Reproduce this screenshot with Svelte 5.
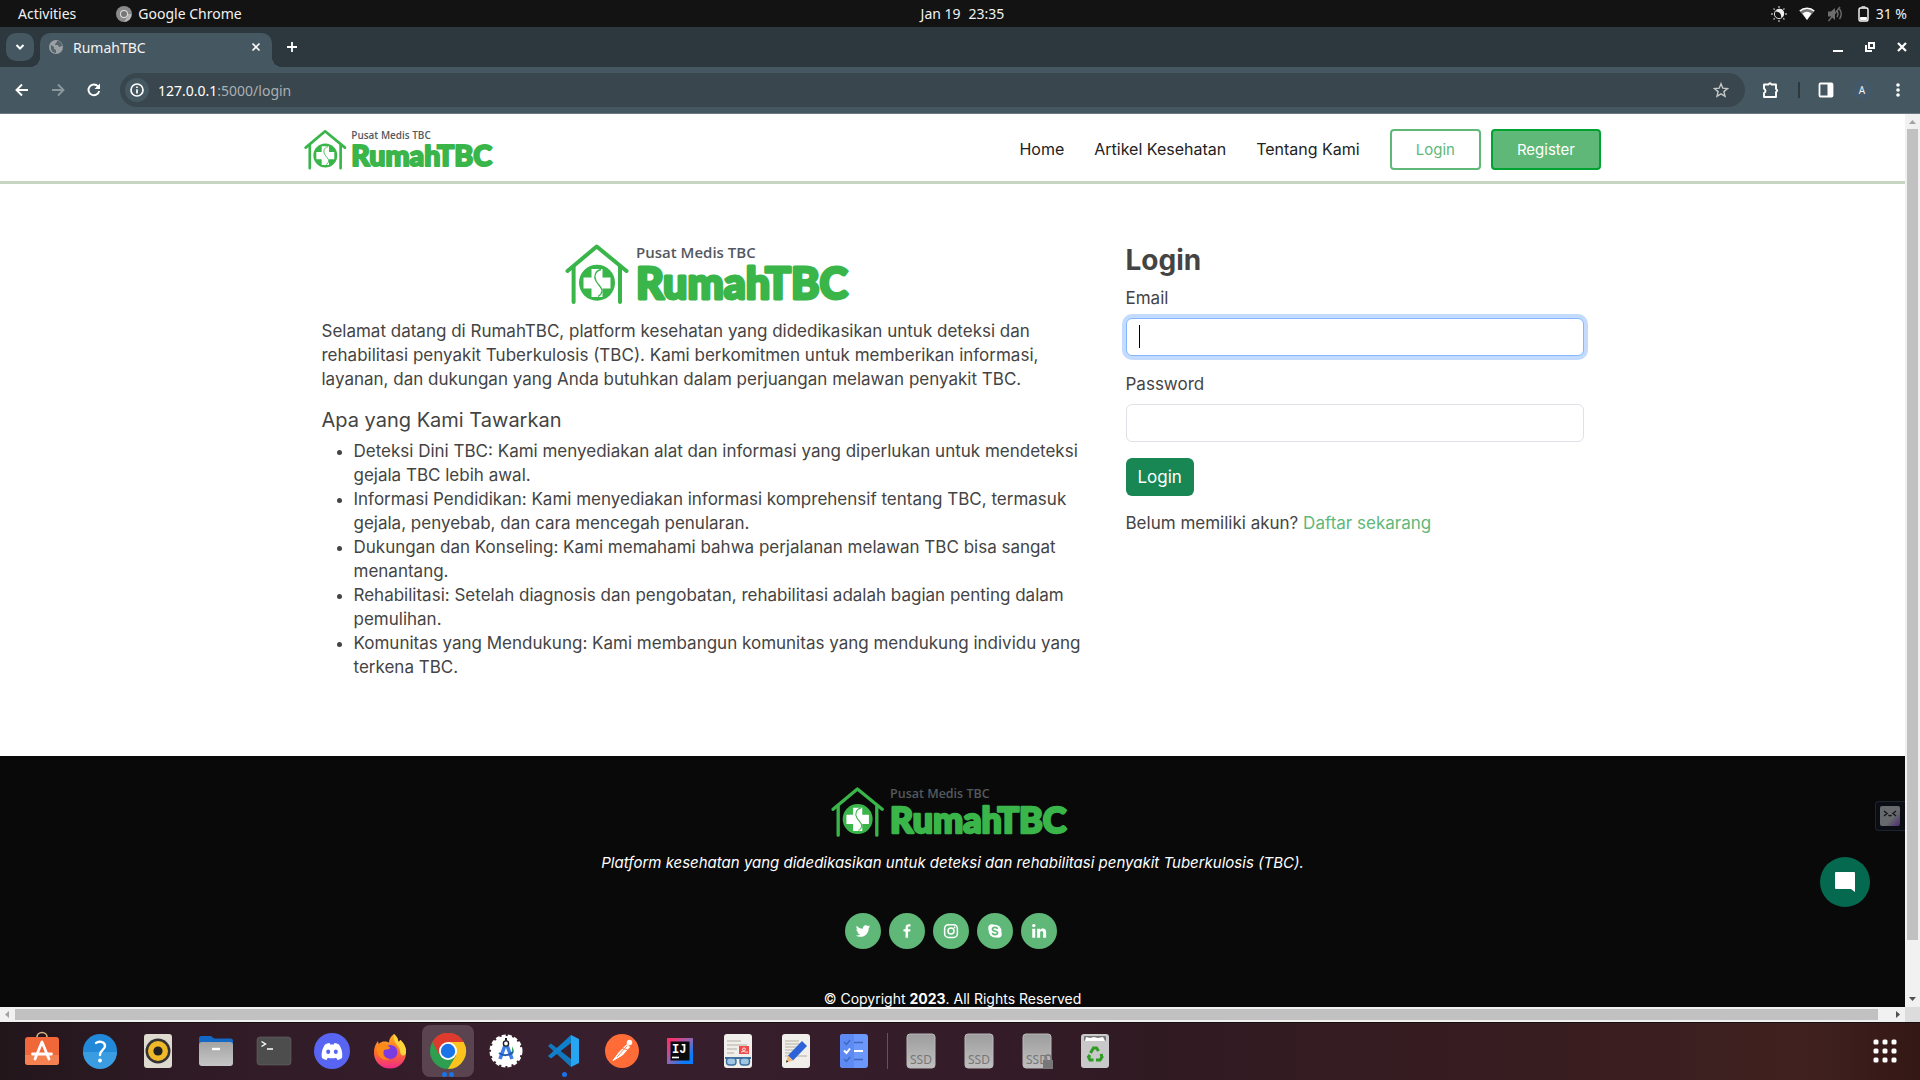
<script>
  const nav = ['Home', 'Artikel Kesehatan', 'Tentang Kami'];
  const offers = [
    'Deteksi Dini TBC: Kami menyediakan alat dan informasi yang diperlukan untuk mendeteksi gejala TBC lebih awal.',
    'Informasi Pendidikan: Kami menyediakan informasi komprehensif tentang TBC, termasuk gejala, penyebab, dan cara mencegah penularan.',
    'Dukungan dan Konseling: Kami memahami bahwa perjalanan melawan TBC bisa sangat menantang.',
    'Rehabilitasi: Setelah diagnosis dan pengobatan, rehabilitasi adalah bagian penting dalam pemulihan.',
    'Komunitas yang Mendukung: Kami membangun komunitas yang mendukung individu yang terkena TBC.'
  ];
  const socials = ['twitter', 'facebook', 'instagram', 'skype', 'linkedin'];
  const apps = ['store', 'help', 'speaker', 'files', 'terminal', 'discord', 'firefox', 'chrome', 'studio', 'vscode', 'postman', 'idea', 'viewer', 'editor', 'todo'];
  const drives = ['ssd', 'ssd', 'ssdlock', 'trash'];
  let email = $state('');
  let password = $state('');
</script>

{#snippet logo(size)}
  <svg class="logo {size}" viewBox="25 13 293 62" role="img" aria-label="Pusat Medis TBC RumahTBC">
    <g fill="none" stroke="#39b54a" stroke-width="4" stroke-linecap="round" stroke-linejoin="round">
      <path d="M27.500 41 56.700 16.500 86.500 41" />
      <path d="M33.600 37V72M80 37V72" />
    </g>
    <circle cx="57" cy="52.700" r="18" fill="#39b54a" />
    <path d="M51.500 39h11v8.500H70.500v11H62.500V67h-11v-8.500H43.500v-11h8z" fill="#fff" />
    <path d="M61 39.500c-6 1.500-7.500 7-5 11.500s6.500 7 6 10-2 4.500-4 5.500" fill="none" stroke="#39b54a" stroke-width="1.300" />
    <text x="96" y="28" class="logo-small">Pusat Medis TBC</text>
    <text x="96" y="69" class="logo-big">RumahTBC</text>
  </svg>
{/snippet}

{#snippet social(name)}
  <svg viewBox="0 0 24 24" width="18" height="18" fill="#fff" aria-hidden="true">
    {#if name === 'twitter'}
      <path d="M19.600 8v.5c0 5.200-4 11.200-11.200 11.200-2.200 0-4.300-.6-6-1.700 2.100.2 4.200-.4 5.800-1.600-1.700 0-3.200-1.200-3.700-2.700.6.100 1.200.1 1.800-.1-1.800-.4-3.200-2-3.200-3.900.5.300 1.100.5 1.800.5C3.200 9 2.700 6.700 3.700 5c2 2.400 4.900 3.900 8.100 4.100-.6-2.500 1.300-4.900 3.900-4.900 1.100 0 2.100.5 2.900 1.200.9-.2 1.700-.5 2.500-1-.3.900-.9 1.700-1.700 2.200.8-.1 1.500-.3 2.200-.6-.5.800-1.200 1.500-2 2z" />
    {:else if name === 'facebook'}
      <path d="M13.400 21v-8.200h2.800l.4-3.200h-3.200v-2c0-.9.300-1.600 1.600-1.600h1.700V3.100c-.3 0-1.300-.1-2.500-.1-2.400 0-4.100 1.500-4.100 4.200v2.400H7.300v3.200h2.800V21z" />
    {:else if name === 'instagram'}
      <rect x="3.500" y="3.500" width="17" height="17" rx="5" fill="none" stroke="#fff" stroke-width="2" />
      <circle cx="12" cy="12" r="4" fill="none" stroke="#fff" stroke-width="2" /><circle cx="16.800" cy="7.200" r="1.200" />
    {:else if name === 'skype'}
      <circle cx="12" cy="12" r="8.500" /><circle cx="8" cy="8" r="5" /><circle cx="16" cy="16" r="5" />
      <path d="M15.500 9.200c-.8-1.600-2-2-3.500-2-2 0-3.400.9-3.400 2.400 0 3.300 6.800 1.500 6.800 4.700 0 1.500-1.400 2.500-3.500 2.500-1.700 0-3-.7-3.600-2.300" fill="none" stroke="#5fb878" stroke-width="2.200" />
    {:else}
      <circle cx="5" cy="4.800" r="2.300" /><path d="M3 9h4v12H3zM9.500 9h3.800v1.700c.7-1.200 2-2 3.800-2 3.300 0 4.400 2 4.400 5.300v7h-4v-6.200c0-1.700-.4-2.900-1.900-2.900s-2.100 1.100-2.100 2.800V21h-4z" />
    {/if}
  </svg>
{/snippet}

{#snippet appIcon(name)}
  <svg viewBox="0 0 40 40" width="40" height="40" aria-hidden="true">
    {#if name === 'store'}
      <path d="M15 8V6a5 4.500 0 0 1 10 0v2" fill="none" stroke="#d8b48a" stroke-width="1.600" />
      <rect x="3" y="6" width="34" height="28" rx="3" fill="#f0683a" /><path d="M3 24h34v7a3 3 0 0 1-3 3H6a3 3 0 0 1-3-3z" fill="#f58150" />
      <path d="M13 28l7-17 7 17M10.500 23h19" fill="none" stroke="#fff" stroke-width="2.800" stroke-linecap="round" stroke-linejoin="round" />
    {:else if name === 'help'}
      <circle cx="20" cy="20" r="17" fill="#2189d8" /><path d="M3 21h34a17 17 0 0 1-34 0z" fill="#3a9de2" />
      <path d="M16 12c2-2 9-2 9 3 0 4-5 4-5 9" fill="none" stroke="#fff" stroke-width="2.400" stroke-linecap="round" /><circle cx="20" cy="29.500" r="1.900" fill="#fff" />
    {:else if name === 'speaker'}
      <rect x="6" y="3" width="28" height="34" rx="3" fill="#dedad0" /><circle cx="20" cy="20" r="12.500" fill="#333" /><circle cx="20" cy="20" r="10" fill="#f0b929" /><circle cx="20" cy="20" r="4.600" fill="#222" />
    {:else if name === 'files'}
      <path d="M3 12V7.500A2.500 2.500 0 0 1 5.500 5H15l3 2.500h16.500A2.500 2.500 0 0 1 37 10v6H3z" fill="#1469c7" />
      <rect x="3" y="11" width="34" height="24" rx="3" fill="url(#grey)" /><path d="M16 18h8" stroke="#fff" stroke-width="2.400" />
    {:else if name === 'terminal'}
      <rect x="3" y="6" width="34" height="28" rx="3" fill="#4d4d4d" stroke="#666" stroke-width=".6" /><path d="M7.500 10.500l4 2.500-4 2.500M13 18h6" stroke="#fff" stroke-width="1.400" fill="none" />
    {:else if name === 'discord'}
      <circle cx="20" cy="20" r="18" fill="#5865f2" />
      <path d="M10 27c-1-5 .5-10 3-13.500 1.500-1 3-1.400 4.500-1.600l.8 1.600h3.400l.8-1.600c1.500.2 3 .6 4.500 1.600 2.500 3.500 4 8.500 3 13.500-1.500 1.200-3 1.700-4.500 2l-1.300-2.300c-2.800.8-5.600.8-8.400 0L14.500 29c-1.500-.3-3-.8-4.500-2z" fill="#fff" />
      <ellipse cx="16.200" cy="20.800" rx="2" ry="2.300" fill="#5865f2" /><ellipse cx="23.800" cy="20.800" rx="2" ry="2.300" fill="#5865f2" />
    {:else if name === 'firefox'}
      <path d="M24 3c3 2.500 4 5 4.500 8l2-2c4 4 6 8 5.500 13a16 15.500 0 0 1-32 0c-.2-5 1.500-9 4-12l.6 3C11 11 13 10.500 14 10.500c3 0 4 .5 5 1C19 8 21 5 24 3z" fill="url(#fox)" />
      <path d="M24 3c3 2.500 4 5 4.500 8l2-2c4 4 6 8 5.500 13-2 5-6 2-6-2 0-5-8-8-6-17z" fill="#ffd43b" />
      <circle cx="20.500" cy="21" r="7" fill="#7a3be0" /><path d="M7 15c4-3 7-2 11 0 2 1 3 2 1 3l-5 1c-3 5 1 9 6 9-8 3-15-4-13-13z" fill="#ff8a16" />
    {:else if name === 'chrome'}
      <circle cx="20" cy="20" r="18" fill="#2e9e4f" /><path d="M20 20 4.400 11A18 18 0 0 1 35.600 11z" fill="#ea4335" /><path d="M4.400 11A18 18 0 0 1 35.600 11H20L12 25z" fill="#df3a2e" />
      <path d="M20 11h15.600A18 18 0 0 1 20 38l8-13.500z" fill="#fcc31e" /><circle cx="20" cy="20" r="9" fill="#fff" /><circle cx="20" cy="20" r="7.200" fill="#1a73e8" />
    {:else if name === 'studio'}
      <circle cx="20" cy="20" r="15" fill="#fff" /><circle cx="20" cy="20" r="15" fill="none" stroke="#fff" stroke-width="3" stroke-dasharray="4 2" />
      <path d="M26 15l2 5-2 4z" fill="#3ba55c" /><path d="M19.500 13 14 28M20.500 13 26 28" stroke="#3d7fe8" stroke-width="3.600" /><path d="M13 22c4 3 10 3 14-1" fill="none" stroke="#2459b5" stroke-width="2" />
      <circle cx="20" cy="12.500" r="2.600" fill="#fff" stroke="#202124" stroke-width="1.400" /><path d="M20 7v3" stroke="#202124" stroke-width="2" />
    {:else if name === 'vscode'}
      <path d="M4 15l3-2.500L27 28v8z" fill="#1277bd" /><path d="M4 25l3 2.500L27 12V4z" fill="#0f80cc" /><path d="M27 4l8 4v24l-8 4z" fill="#27a4f2" />
    {:else if name === 'postman'}
      <circle cx="20" cy="20" r="17" fill="#ff6c37" /><path d="M11 29.500l6-8 8-8 2.500 2.500-7 8z" fill="#fff" stroke="#fff" stroke-linejoin="round" /><circle cx="27.500" cy="11.500" r="2.700" fill="#fff" /><path d="M15 26l10-11M19 17l7 2" stroke="#ff6c37" stroke-width=".8" />
    {:else if name === 'idea'}
      <rect x="7" y="7" width="26" height="26" fill="url(#idea)" /><rect x="10.500" y="10.500" width="19" height="19" fill="#0b0b0d" />
      <text x="12" y="21.500" class="mono">IJ</text><path d="M12 26.500h7" stroke="#fff" stroke-width="1.600" />
    {:else if name === 'viewer'}
      <rect x="6" y="3" width="28" height="34" rx="3" fill="#f1efeb" /><path d="M9 10h14M9 14h20M9 18h10M9 22h7" stroke="#b5ae9f" stroke-width="1.200" />
      <rect x="21" y="15" width="10" height="8" fill="#ef4b4b" /><path d="M23 21c4 0 6-4 3-4s-1 5 4 4" fill="none" stroke="#fff" stroke-width=".9" />
      <path d="M7 27h26" stroke="#3e719f" stroke-width="2" /><g fill="#9fc6e2" stroke="#3e719f" stroke-width="1.400"><rect x="8.500" y="27" width="9.500" height="7" rx="3" /><rect x="22" y="27" width="9.500" height="7" rx="3" /></g>
    {:else if name === 'editor'}
      <rect x="6" y="3" width="28" height="34" rx="3" fill="#f1efeb" /><path d="M9 10h14M9 13h16M9 16h13M9 19h10M9 22h8M9 25h22" stroke="#b5ae9f" />
      <path d="M26 10l5 5-14 14.500-5-5z" fill="#2e62d9" /><path d="M12 24.500l5 5-7 2z" fill="#f0b978" /><path d="M10 31.500l.7-2.400 1.600 1.600z" fill="#222" />
    {:else if name === 'todo'}
      <rect x="6" y="3" width="28" height="34" rx="3" fill="#6c98fb" /><path d="M9 3h11v34H9a3 3 0 0 1-3-3V6a3 3 0 0 1 3-3z" fill="#5e8af3" />
      <path d="M10 11l2.500 2.500L16 9M20 11.500h9M10 28l2.500 2.500L16 26M20 28.500h9" stroke="#4067bd" fill="none" stroke-width="1.400" /><path d="M10 19.500l2.500 2.500L16 17.500M20 20h9" stroke="#fff" fill="none" stroke-width="2" />
    {:else if name === 'trash'}
      <rect x="6" y="3" width="28" height="34" rx="3" fill="#c9c9c9" /><rect x="9" y="5" width="22" height="5" rx="1" fill="#777" /><path d="M10 10l1-4 4 1 4-1 4 1 5-1 2 4z" fill="#fff" />
      <g fill="none" stroke="#2e9b23" stroke-width="3"><path d="M15.500 22l3-5h3l2 3" /><path d="M26 23l1 3-2 3h-4" /><path d="M18.500 29H15l-1.500-3 1.500-2" /></g>
    {:else}
      <rect x="6" y="3" width="28" height="34" rx="3" fill="url(#drive)" stroke="#b9b9b9" /><text x="9" y="33" class="ssd">SSD</text>
      {#if name === 'ssdlock'}<path d="M28 30v-3a3 3 0 0 1 6 0v3" fill="none" stroke="#777" stroke-width="1.400" /><rect x="26" y="29" width="10" height="9" fill="#777" />{/if}
    {/if}
  </svg>
{/snippet}

<svg class="defs" width="0" height="0" aria-hidden="true">
  <defs>
    <linearGradient id="grey" x2="0" y2="1"><stop stop-color="#a3a3a3" /><stop offset="1" stop-color="#c6c6c6" /></linearGradient>
    <linearGradient id="drive" x2="0" y2="1"><stop stop-color="#9d9d9d" /><stop offset="1" stop-color="#c0c0c0" /></linearGradient>
    <linearGradient id="fox" x2="0" y2="1"><stop stop-color="#ffb01f" /><stop offset=".55" stop-color="#ff6b2d" /><stop offset="1" stop-color="#f0298a" /></linearGradient>
    <linearGradient id="idea" x2="1" y2="1"><stop offset=".1" stop-color="#fe2f6b" /><stop offset=".5" stop-color="#8b67b5" /><stop offset=".8" stop-color="#087cfa" /></linearGradient>
  </defs>
</svg>

<div class="desktop">
  <div class="panel">
    <div class="panel-side">
      <button class="plain">Activities</button>
      <button class="plain app-menu">
        <svg width="16" height="16" viewBox="0 0 16 16" aria-hidden="true"><circle cx="8" cy="8" r="8" fill="#8a8a8a" /><path d="M8 8h7.500A8 8 0 0 1 8 16l4-6z" fill="#b5b5b5" /><circle cx="8" cy="8" r="4" fill="#ddd" /><circle cx="8" cy="8" r="3" fill="#777" /></svg>
        Google Chrome
      </button>
    </div>
    <button class="plain clock"><span>Jan 19</span><span>23:35</span></button>
    <div class="panel-side status">
      <svg width="16" height="16" viewBox="0 0 16 16" aria-hidden="true"><circle cx="8" cy="8" r="4.600" fill="none" stroke="#ddd" /><path d="M6 4.500a4.500 4.500 0 1 0 5.500 6A5 5 0 0 1 6 4.500z" transform="rotate(180 8 8)" fill="#eee" /><path d="M8 0v2M8 14v2M0 8h2M14 8h2M2.500 2.500l1.300 1.300M12.200 12.200l1.300 1.300M13.500 2.500l-1.300 1.300M3.800 12.200l-1.300 1.300" stroke="#aaa" stroke-width="1.400" /></svg>
      <svg width="16" height="16" viewBox="0 0 16 16" aria-hidden="true"><path d="M.5 5A11 11 0 0 1 15.500 5L8 14z" fill="#777" /><path d="M3.500 7.500a7 7 0 0 1 9 0L8 14z" fill="#fff" /><path d="M.8 5A10.500 10.500 0 0 1 15.200 5" fill="none" stroke="#fff" stroke-width="1.500" /></svg>
      <svg width="16" height="16" viewBox="0 0 16 16" aria-hidden="true"><path d="M1 5.500h3L8 2v12l-4-3.500H1z" fill="#6d6d6d" /><path d="M10 5q2 3 0 6M12.500 3q3.500 5 0 10M1.500 15 13 1" fill="none" stroke="#6d6d6d" stroke-width="1.400" /></svg>
      <svg width="16" height="16" viewBox="0 0 16 16" aria-hidden="true"><rect x="4" y="2" width="9" height="13" rx="1.500" fill="none" stroke="#fff" stroke-width="1.400" /><path d="M6.500.8h4M5.500 11.500h6v2h-6z" stroke="#fff" fill="#fff" /></svg>
      <span>31 %</span>
    </div>
  </div>

  <div class="tabs">
    <button class="tab-search" aria-label="Cari tab"><svg width="10" height="10" viewBox="0 0 10 10"><path d="M1.500 3 5 6.500 8.500 3" fill="none" stroke="#fff" stroke-width="2" /></svg></button>
    <div class="tab">
      <svg width="14" height="14" viewBox="0 0 14 14" aria-hidden="true"><circle cx="7" cy="7" r="7" fill="#9ba0a4" /><path d="M2 5l3 2v2l2 1v3C4 13 1 10 2 5zM8 1c0 2-2 2-2 4h3l1 2 3-1c0-3-2-5-5-5z" fill="#56646c" /></svg>
      <span>RumahTBC</span>
      <button class="icon" aria-label="Tutup tab"><svg width="10" height="10" viewBox="0 0 10 10"><path d="M1.500 1.500l7 7M8.500 1.500l-7 7" stroke="#fff" stroke-width="1.600" /></svg></button>
    </div>
    <button class="icon new-tab" aria-label="Tab baru"><svg width="12" height="12" viewBox="0 0 12 12"><path d="M6 1v10M1 6h10" stroke="#fff" stroke-width="1.800" /></svg></button>
    <div class="window-buttons">
      <button class="icon" aria-label="Minimalkan"><svg width="10" height="10" viewBox="0 0 10 10"><path d="M0 9h10" stroke="#fff" stroke-width="2" /></svg></button>
      <button class="icon" aria-label="Pulihkan"><svg width="10" height="10" viewBox="0 0 10 10"><path d="M4 1h5v5H4zM1 3v6h6" fill="none" stroke="#fff" stroke-width="2" /></svg></button>
      <button class="icon" aria-label="Tutup"><svg width="10" height="10" viewBox="0 0 10 10"><path d="M1 1l8 8M9 1 1 9" stroke="#fff" stroke-width="2.200" /></svg></button>
    </div>
  </div>

  <div class="toolbar">
    <button class="icon" aria-label="Kembali"><svg width="14" height="14" viewBox="0 0 14 14"><path d="M13 7H2M7 1.500 1.500 7 7 12.500" fill="none" stroke="#fff" stroke-width="1.900" /></svg></button>
    <button class="icon" aria-label="Maju"><svg width="14" height="14" viewBox="0 0 14 14"><path d="M1 7h11M7 1.500 12.500 7 7 12.500" fill="none" stroke="#8b979d" stroke-width="1.900" /></svg></button>
    <button class="icon" aria-label="Muat ulang"><svg width="14" height="14" viewBox="0 0 14 14"><path d="M12.200 8A5.400 5.400 0 1 1 11 3.300" fill="none" stroke="#fff" stroke-width="1.900" /><path d="M13 .5V6H7.500z" fill="#fff" /></svg></button>
    <div class="address">
      <span class="info"><svg width="14" height="14" viewBox="0 0 14 14" aria-hidden="true"><circle cx="7" cy="7" r="6" fill="none" stroke="#fff" stroke-width="1.700" /><path d="M7 6.200v4.300M7 3.400v1.700" stroke="#fff" stroke-width="1.700" /></svg></span>
      <span class="url">127.0.0.1<span>:5000/login</span></span>
      <button class="icon" aria-label="Markah"><svg width="16" height="16" viewBox="0 0 16 16"><path d="M8 1.800l1.800 4.400 4.700.4-3.600 3 1.100 4.700L8 11.800l-4 2.500 1.100-4.700-3.600-3 4.700-.4z" fill="none" stroke="#c6c8c8" stroke-width="1.400" /></svg></button>
    </div>
    <div class="tools">
      <button class="icon" aria-label="Ekstensi"><svg width="18" height="18" viewBox="0 0 18 18"><path d="M2 3.500h4.500q1.500-2.500 3 0H14V8q2.500 1.500 0 3v5H2v-4q3-2 0-4.500z" fill="none" stroke="#fff" stroke-width="1.900" stroke-linejoin="round" /></svg></button>
      <i class="divider"></i>
      <button class="icon" aria-label="Panel samping"><svg width="16" height="16" viewBox="0 0 16 16"><rect x="1.500" y="1.500" width="13" height="13" rx="1" fill="none" stroke="#fff" stroke-width="1.800" /><path d="M9.500 1h5v14h-5z" fill="#fff" /></svg></button>
      <button class="icon avatar">A</button>
      <button class="icon" aria-label="Menu"><svg width="4" height="16" viewBox="0 0 4 16" fill="#fff"><circle cx="2" cy="3" r="1.800" /><circle cx="2" cy="8" r="1.800" /><circle cx="2" cy="13" r="1.800" /></svg></button>
    </div>
  </div>

  <div class="viewport">
    <div class="page">
      <header>
        <div class="bar">
          <a href="#home">{@render logo('small')}</a>
          <nav>
            {#each nav as item}<a href="#{item}">{item}</a>{/each}
            <div class="auth">
              <a class="btn outline" href="#login">Login</a>
              <a class="btn solid" href="#register">Register</a>
            </div>
          </nav>
        </div>
      </header>

      <main>
        <section>
          <div class="hero">{@render logo('large')}</div>
          <p>Selamat datang di RumahTBC, platform kesehatan yang didedikasikan untuk deteksi dan rehabilitasi penyakit Tuberkulosis (TBC). Kami berkomitmen untuk memberikan informasi, layanan, dan dukungan yang Anda butuhkan dalam perjuangan melawan penyakit TBC.</p>
          <h5>Apa yang Kami Tawarkan</h5>
          <ul>
            {#each offers as offer}<li>{offer}</li>{/each}
          </ul>
        </section>
        <form onsubmit={(e) => e.preventDefault()}>
          <h3>Login</h3>
          <label for="email">Email</label>
          <div class="field">
            <input id="email" class="focused" type="email" bind:value={email} />
            <i class="caret"></i>
          </div>
          <label for="password">Password</label>
          <div class="field"><input id="password" type="password" bind:value={password} /></div>
          <button class="submit">Login</button>
          <p>Belum memiliki akun? <a href="#register">Daftar sekarang</a></p>
        </form>
      </main>

      <footer>
        {@render logo('medium')}
        <p class="tagline">Platform kesehatan yang didedikasikan untuk deteksi dan rehabilitasi penyakit Tuberkulosis (TBC).</p>
        <div class="socials">
          {#each socials as name}<a href="#{name}" aria-label={name}>{@render social(name)}</a>{/each}
        </div>
        <p class="copy">© Copyright <b>2023</b>. All Rights Reserved</p>
      </footer>

      <button class="side-widget" aria-label="Asisten"><svg width="20" height="20" viewBox="0 0 20 20"><defs><linearGradient id="bot" x2="1" y2="1"><stop offset=".6" stop-color="#666a6c" /><stop offset="1" stop-color="#4d2a72" /></linearGradient></defs><rect width="20" height="20" rx="2" fill="url(#bot)" /><path d="M4 5l3 2.500L4 10M16 5l-3 2.500L16 10M8.500 9q1.500 1.500 3 0" fill="none" stroke="#16181c" stroke-width="1.400" /></svg></button>
      <button class="chat" aria-label="Obrolan"><svg width="20" height="20" viewBox="0 0 20 20"><path d="M1 0h18a1 1 0 0 1 1 1v19l-4-3H1a1 1 0 0 1-1-1V1a1 1 0 0 1 1-1z" fill="#fff" /></svg></button>
    </div>
    <div class="vscroll">
      <svg width="7" height="4" viewBox="0 0 7 4"><path d="M0 4 3.500 0 7 4z" fill="#a3a3a3" /></svg>
      <div class="vtrack"><i></i></div>
      <svg width="7" height="4" viewBox="0 0 7 4"><path d="M0 0h7L3.500 4z" fill="#505050" /></svg>
    </div>
    <div class="hscroll">
      <svg width="4" height="7" viewBox="0 0 4 7"><path d="M4 0v7L0 3.500z" fill="#a3a3a3" /></svg>
      <div class="htrack"><i></i></div>
      <svg width="4" height="7" viewBox="0 0 4 7"><path d="M0 0v7l4-3.500z" fill="#505050" /></svg>
    </div>
    <div class="corner"></div>
  </div>

  <div class="dock">
    {#each apps as app}
      <button class="dock-item" class:active={app === 'chrome'} aria-label={app}>
        {@render appIcon(app)}
        {#if app === 'chrome'}<span class="dots"><i></i><i></i></span>{/if}
        {#if app === 'vscode'}<span class="dots"><i></i></span>{/if}
      </button>
    {/each}
    <i class="dock-line"></i>
    {#each drives as app}<button class="dock-item" aria-label={app}>{@render appIcon(app)}</button>{/each}
    <button class="icon grid" aria-label="Tampilkan aplikasi">
      <svg width="24" height="24" viewBox="0 0 24 24" fill="#fff">{#each [3, 12, 21] as y}{#each [3, 12, 21] as x}<rect x={x - 2.5} y={y - 2.5} width="5" height="5" rx="1.500" />{/each}{/each}</svg>
    </button>
  </div>
</div>

<style>
  :global(body) { margin: 0; }
  .desktop, .desktop :global(*) { box-sizing: border-box; }
  .desktop { display: flex; flex-direction: column; height: 100vh; overflow: hidden; font-family: Inter, sans-serif; }
  .defs { position: absolute; }
  svg { display: block; flex: none; }
  button { font: inherit; cursor: pointer; }
  a { text-decoration: none; color: inherit; }
  p, h3, h5, ul { margin: 0; }

  .plain, .icon { border: 0; padding: 0; background: none; color: inherit; display: flex; align-items: center; justify-content: center; }
  .panel, .tabs, .toolbar { flex: none; font-family: "Noto Sans", sans-serif; color: #f2f2f2; font-size: 14px; }
  .panel { height: 27px; background: #131313; display: flex; align-items: center; }
  .panel-side { flex: 1; display: flex; align-items: center; padding-left: 18px; gap: 40px; }
  .app-menu { gap: 6px; }
  .clock { gap: 8px; }
  .status { justify-content: flex-end; gap: 12px; padding: 0 13px 0 0; }
  .status span { margin-left: -7px; }

  .tabs { height: 40px; background: #2d383e; display: flex; align-items: center; padding: 6px 13px 0 6px; }
  .tab-search { width: 28px; height: 28px; border: 0; border-radius: 10px; background: #455760; padding: 0; display: grid; place-items: center; align-self: flex-start; }
  .tab { position: relative; width: 232px; height: 34px; margin-left: 6px; padding: 0 11px 6px 9px; background: #455760; border-radius: 10px 10px 0 0; display: flex; align-items: center; gap: 10px; }
  .tab::before, .tab::after { content: ""; position: absolute; bottom: 0; width: 10px; height: 10px; }
  .tab::before { right: 100%; background: radial-gradient(circle at 0 0, transparent 10px, #455760 10px); }
  .tab::after { left: 100%; background: radial-gradient(circle at 100% 0, transparent 10px, #455760 10px); }
  .tab span { flex: 1; }
  .new-tab { margin: 0 0 6px 14px; }
  .window-buttons { margin-left: auto; padding-bottom: 6px; display: flex; gap: 22px; }

  .toolbar { height: 47px; background: #455760; border-bottom: 1px solid #6a7a82; display: flex; align-items: center; gap: 22px; padding: 0 14px 0 15px; }
  .address { flex: 1; height: 34px; margin-left: -3px; background: #39464d; border-radius: 17px; display: flex; align-items: center; padding: 0 16px 0 5px; }
  .info { width: 24px; height: 24px; border-radius: 12px; background: #455760; display: grid; place-items: center; }
  .url { flex: 1; margin-left: 9px; color: #fff; }
  .url span { color: #a9b0b3; }
  .tools { display: flex; align-items: center; gap: 18px; margin-left: -5px; }
  .divider { width: 2px; height: 16px; background: #2d383e; }
  .avatar { width: 20px; height: 20px; border-radius: 10px; background: #43596a; font-size: 10px; }
  .tools .icon:last-child { width: 16px; }

  .viewport { flex: 1; min-height: 0; display: grid; grid-template: 1fr 15px / 1fr 15px; }
  .page { position: relative; overflow: hidden; background: #fff; color: #444; font-size: 17px; line-height: 24px; }
  .vscroll, .hscroll { background: #f1f1f1; display: flex; align-items: center; }
  .vscroll { grid-area: 1 / 2; flex-direction: column; padding: 6px 0; }
  .hscroll { grid-area: 2 / 1; padding: 0 5px; }
  .vtrack { flex: 1; width: 11px; padding: 5px 0; }
  .vtrack i { display: block; height: 94%; background: #c1c1c1; }
  .htrack { flex: 1; height: 11px; padding: 0 18px 0 6px; }
  .htrack i { display: block; height: 11px; background: #c1c1c1; }
  .corner { grid-area: 2 / 2; background: #dcdcdc; }

  .logo.small { width: 195px; }
  .logo.medium { width: 244px; }
  .logo.large { width: 293px; }
  .logo-small { font: 600 15px "Open Sans", sans-serif; fill: #54595f; }
  .logo-big { font: 900 43px Lato, sans-serif; fill: #39b54a; stroke: #39b54a; stroke-width: 3px; stroke-linejoin: round; }

  header { border-bottom: 3px solid #c5d5c2; padding: 15px 12px 11px; }
  .bar { max-width: 1297px; margin: 0 auto; display: flex; align-items: center; justify-content: space-between; }
  nav { display: flex; align-items: center; gap: 30px; font-size: 16px; line-height: 21px; color: #222; }
  .auth { display: flex; gap: 10px; }
  .btn { border: 2px solid #5fb878; border-radius: 4px; padding: 8px 24px; font-size: 15px; color: #5fb878; }
  .btn.solid { background: #5fb878; border-color: #00a331; color: #fff; }

  main { max-width: 1286px; margin: 0 auto; padding: 59px 12px 77px; display: grid; grid-template-columns: 780fr 458fr; gap: 24px; }
  .hero { display: flex; justify-content: center; margin-bottom: 14px; }
  h5 { font-size: 20px; line-height: 24px; font-weight: 400; margin: 17px 0 7px; }
  ul { padding-left: 32px; }
  h3 { font-size: 28px; line-height: 34px; font-weight: 700; margin-bottom: 9px; }
  form label { display: block; margin-bottom: 8px; }
  .field { position: relative; margin-bottom: 16px; }
  input { display: block; width: 100%; height: 38px; border: 1px solid #dee2e6; border-radius: 6px; padding: 6px 12px; font: inherit; outline: 0; }
  input.focused { border-color: #86b7fe; box-shadow: 0 0 0 4px #c2dbfe; }
  .caret { position: absolute; left: 13px; top: 7px; width: 1px; height: 23px; background: #000; }
  .submit { height: 38px; border: 0; border-radius: 6px; padding: 0 12px; background: #198754; color: #fff; display: block; margin-bottom: 15px; }
  form a { color: #5fb878; }

  footer { background: #090909; color: #fff; font-size: 14px; display: flex; flex-direction: column; align-items: center; padding: 30px 12px 40px; }
  .tagline { font-size: 15px; font-style: italic; margin: 13px 0 38px; }
  .socials { display: flex; gap: 8px; margin-bottom: 38px; padding-right: 4px; }
  .socials a { width: 36px; height: 36px; border-radius: 18px; background: #5fb878; display: grid; place-items: center; }

  .side-widget { position: absolute; right: 0; bottom: 176px; width: 30px; height: 30px; border: 1px solid #1d2430; border-right: 0; border-radius: 4px 0 0 4px; background: #0b0d14; padding: 4px; }
  .chat { position: absolute; right: 35px; bottom: 100px; width: 50px; height: 50px; border: 0; border-radius: 25px; background: #04694f; display: grid; place-items: center; padding: 0; }

  .dock { flex: none; height: 58px; background: linear-gradient(90deg, #22161b, #2e1a24 8%, #381f2d 28%, #351c29 50%, #301a22 60%, #3a1e20 85%, #40211f 94%, #341815); box-shadow: inset 0 1px #17100f; display: flex; align-items: center; padding: 0 23px 0 13px; }
  .dock-item { position: relative; width: 52px; height: 52px; margin: 0 3px; padding: 0; border: 0; border-radius: 8px; background: none; display: grid; place-items: center; flex: none; }
  .dock-item.active { background: #5a4450; }
  .dots { position: absolute; left: 0; right: 0; bottom: 0; display: flex; justify-content: center; gap: 2px; }
  .dots i { width: 5px; height: 5px; border-radius: 3px; background: #1a73e8; }
  .dock-line { width: 1px; height: 36px; margin: 0 4px; background: #655359; }
  .grid { margin-left: auto; }
  .mono { font: 700 12px "Liberation Mono", monospace; fill: #fff; }
  .ssd { font: 12px "Noto Sans", sans-serif; fill: #777; }
</style>
